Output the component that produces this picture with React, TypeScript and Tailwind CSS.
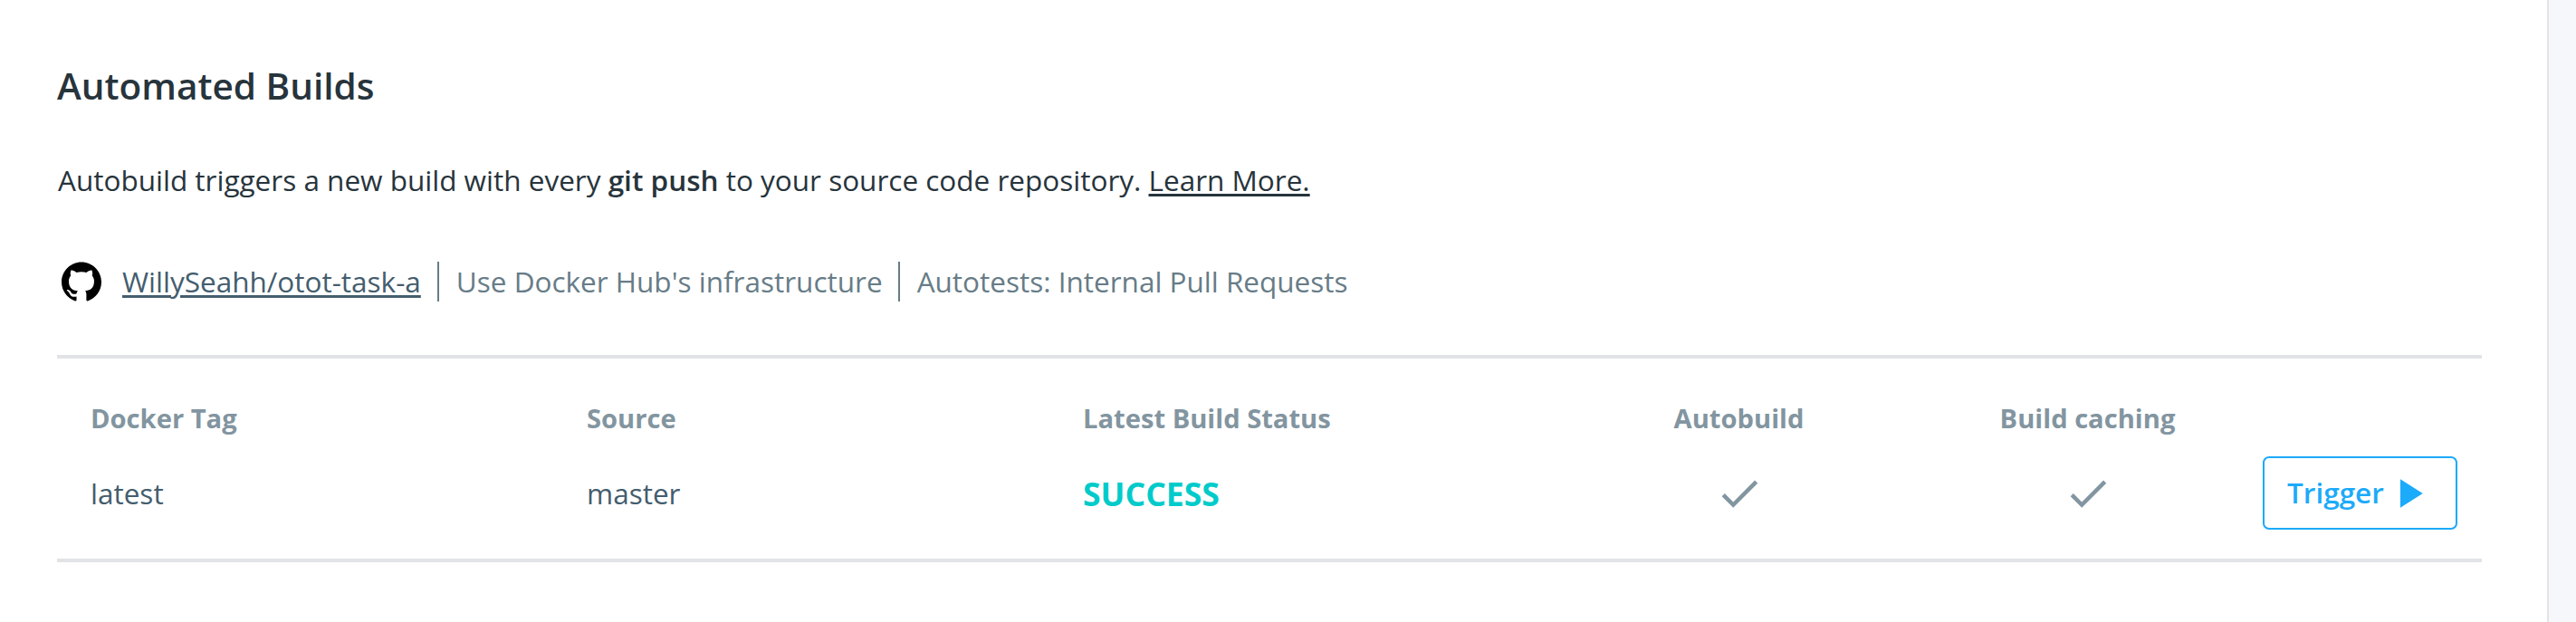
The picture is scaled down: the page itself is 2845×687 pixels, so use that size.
const Check = () => (
  <svg viewBox="0 0 24 24" className="size-[54px] fill-[#8295a0]" aria-hidden="true">
    <path d="M9 16.17L4.83 12l-1.42 1.41L9 19 21 7l-1.41-1.41z" />
  </svg>
);

const GithubMark = () => (
  <svg viewBox="0 0 24 24" className="size-[44px] shrink-0 fill-black" aria-hidden="true">
    <path d="M12 .297c-6.63 0-12 5.373-12 12 0 5.303 3.438 9.8 8.205 11.385.6.113.82-.258.82-.577 0-.285-.01-1.04-.015-2.04-3.338.724-4.042-1.61-4.042-1.61C4.422 18.07 3.633 17.7 3.633 17.7c-1.087-.744.084-.729.084-.729 1.205.084 1.838 1.236 1.838 1.236 1.07 1.835 2.809 1.305 3.495.998.108-.776.417-1.305.76-1.605-2.665-.3-5.466-1.332-5.466-5.93 0-1.31.465-2.38 1.235-3.22-.135-.303-.54-1.523.105-3.176 0 0 1.005-.322 3.3 1.23.96-.267 1.98-.399 3-.405 1.02.006 2.04.138 3 .405 2.28-1.552 3.285-1.23 3.285-1.23.645 1.653.24 2.873.12 3.176.765.84 1.23 1.91 1.23 3.22 0 4.61-2.805 5.625-5.475 5.92.42.36.81 1.096.81 2.22 0 1.606-.015 2.896-.015 3.286 0 .315.21.69.825.57C20.565 22.092 24 17.592 24 12.297c0-6.627-5.373-12-12-12" />
  </svg>
);

const columns = "grid grid-cols-[548px_548px_533px_383px_387px_215px] items-center pl-[37px]";

export default function App() {
  return (
    <div className="flex h-[687px] w-[2845px] bg-[#f5f7fa] font-['Open_Sans',sans-serif] text-[31.5px] leading-[44px]">
      <main className="w-[2815px] border-r-2 border-[#e1e3e6] bg-white pl-[63px] pr-[72px] pt-[67px] text-[#27343c]">
        <h1 className="h-[56px] text-[40.5px] font-semibold leading-[56px]">Automated Builds</h1>
        <p className="mt-[54px] h-[44px] pl-px">
          Autobuild triggers a new build with every <b className="font-semibold">git push</b> to your source code
          repository.{" "}
          <a href="#" className="underline decoration-[3px] underline-offset-[3px]">
            Learn More.
          </a>
        </p>
        <div className="mt-[68px] flex h-[43px] items-center text-[#677c87]">
          <div className="flex items-center pl-[5px]">
            <GithubMark />
            <a
              href="#"
              className="ml-[23px] text-[#445d6e] underline decoration-[3px] underline-offset-[3px]"
            >
              WillySeahh/otot-task-a
            </a>
          </div>
          <span className="ml-[18px] border-l-2 border-[#677c87] pl-[19px]">Use Docker Hub's infrastructure</span>
          <span className="ml-[17px] border-l-2 border-[#677c87] pl-[19px]">Autotests: Internal Pull Requests</span>
        </div>

        <section className="mt-[60px] h-[229px] border-y-4 border-[#e1e3e6] pt-[44px]">
          <div className={`${columns} h-[40px] text-[29.15px] font-bold text-[#8295a0]`}>
            <span>Docker Tag</span>
            <span>Source</span>
            <span>Latest Build Status</span>
            <span className="text-center">Autobuild</span>
            <span className="text-center">Build caching</span>
          </div>
          <div className={`${columns} mt-[24px] h-[81px] text-[#445d6e]`}>
            <span>latest</span>
            <span>master</span>
            <span className="text-[35.6px] font-bold text-[#00cbca]">SUCCESS</span>
            <span className="flex justify-center">
              <Check />
            </span>
            <span className="flex justify-center">
              <Check />
            </span>
            <button className="flex h-[81px] w-[215px] items-center rounded-[7px] border-2 border-[#1caafa] pl-[25px] font-semibold text-[#1caafa]">
              <span className="pb-px">Trigger</span>
              <svg viewBox="0 0 24 24" className="size-[54px] shrink-0 fill-[#1caafa]" aria-hidden="true">
                <path d="M8 5v14l11-7z" />
              </svg>
            </button>
          </div>
        </section>
      </main>
    </div>
  );
}
